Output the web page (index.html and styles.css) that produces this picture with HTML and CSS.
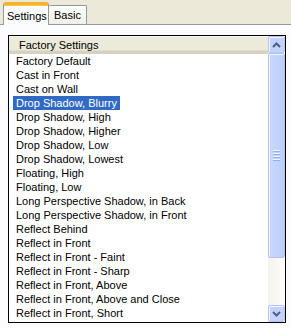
FILE: index.html
```html
<!DOCTYPE html>
<html>
<head>
	<title>Settings</title>
	<link rel="stylesheet" href="styles.css">
</head>
<body>
	<div class="tab-strip">
		<div class="tab tab-active">Settings</div>
		<div class="tab">Basic</div>
	</div>
	<div class="panel">
		<div class="list-box">
			<div class="list-main">
				<div class="list-header">Factory Settings</div>
				<div class="list-rows">
					<div class="row"><span>Factory Default</span></div>
					<div class="row"><span>Cast in Front</span></div>
					<div class="row"><span>Cast on Wall</span></div>
					<div class="row row-selected"><span>Drop Shadow, Blurry</span></div>
					<div class="row"><span>Drop Shadow, High</span></div>
					<div class="row"><span>Drop Shadow, Higher</span></div>
					<div class="row"><span>Drop Shadow, Low</span></div>
					<div class="row"><span>Drop Shadow, Lowest</span></div>
					<div class="row"><span>Floating, High</span></div>
					<div class="row"><span>Floating, Low</span></div>
					<div class="row"><span>Long Perspective Shadow, in Back</span></div>
					<div class="row"><span>Long Perspective Shadow, in Front</span></div>
					<div class="row"><span>Reflect Behind</span></div>
					<div class="row"><span>Reflect in Front</span></div>
					<div class="row"><span>Reflect in Front - Faint</span></div>
					<div class="row"><span>Reflect in Front - Sharp</span></div>
					<div class="row"><span>Reflect in Front, Above</span></div>
					<div class="row"><span>Reflect in Front, Above and Close</span></div>
					<div class="row"><span>Reflect in Front, Short</span></div>
				</div>
			</div>
			<div class="scrollbar">
				<div class="sb-button">
					<svg width="9" height="6" viewBox="0 0 9 6"><polyline points="1,5 4.5,1.5 8,5" fill="none" stroke="#4d6185" stroke-width="2"/></svg>
				</div>
				<div class="sb-thumb">
					<div class="grip">
						<i></i><i></i><i></i><i></i>
					</div>
				</div>
				<div class="sb-track"></div>
				<div class="sb-button">
					<svg width="9" height="6" viewBox="0 0 9 6"><polyline points="1,1 4.5,4.5 8,1" fill="none" stroke="#4d6185" stroke-width="2"/></svg>
				</div>
			</div>
		</div>
	</div>
</body>
</html>
```

FILE: styles.css
```css
body {
	margin: 0;
	background: #fcfcfe;
	font-family: "Liberation Sans", Arial, sans-serif;
	font-size: 11px;
	color: #000;
}
.tab-strip {
	display: flex;
	align-items: flex-end;
	height: 24px;
	padding-left: 3px;
	background: #ece9d8;
	border-bottom: 1px solid #919b9c;
}
.tab {
	box-sizing: border-box;
	width: 38px;
	height: 19px;
	padding: 3px 0 0 5px;
	background: linear-gradient(#fefefe, #f1efe6);
	border: 1px solid #919b9c;
	border-bottom: none;
	border-left: none;
	border-radius: 2px 2px 0 0;
}
.tab-active {
	width: 46px;
	height: 23px;
	margin-bottom: -1px;
	padding: 5px 0 0 3px;
	background: #fcfcfe;
	border-left: 1px solid #919b9c;
	border-top: 3px solid #f6b233;
	border-radius: 3px 3px 0 0;
	box-shadow: inset 0 1px 0 #ffc73c;
}
.panel {
	padding: 10px 0 0 8px;
}
.list-box {
	display: flex;
	width: 276px;
	height: 286px;
	border: 1px solid #000;
	background: #fff;
	overflow: hidden;
}
.list-main {
	flex: 1;
	overflow: hidden;
}
.list-header {
	box-sizing: border-box;
	height: 18px;
	padding: 3px 0 0 10px;
	background: #ebeadb;
	border-bottom: 3px solid #d6d2c2;
	box-shadow: inset 0 -1px 0 #e2decd, inset 0 1px 0 #f7f6ef;
}
.row {
	height: 14px;
	line-height: 14px;
	padding-left: 4px;
	white-space: nowrap;
}
.row span {
	display: inline-block;
	padding: 0 3px;
}
.row-selected span {
	background: #316ac5;
	color: #fff;
}
.scrollbar {
	display: flex;
	flex-direction: column;
	width: 17px;
	background: linear-gradient(90deg, #f3f1ec, #fefefb);
}
.sb-button {
	box-sizing: border-box;
	display: flex;
	align-items: center;
	justify-content: center;
	height: 17px;
	background: #c3d3fd;
	border: 1px solid #b4c8f6;
	border-radius: 2px;
	box-shadow: inset 1px 1px 0 #eef3fe;
}
.sb-thumb {
	box-sizing: border-box;
	display: flex;
	align-items: center;
	justify-content: center;
	height: 205px;
	background: linear-gradient(90deg, #c9d8fc, #bccffb);
	border: 1px solid #b0c4f0;
	border-radius: 2px;
	box-shadow: inset 1px 1px 0 #eef3fe;
}
.grip {
	display: flex;
	flex-direction: column;
	gap: 1px;
}
.grip i {
	display: block;
	width: 7px;
	height: 1px;
	background: #eef4fe;
	border-bottom: 1px solid #8cb0f8;
}
.sb-track {
	flex: 1;
}
```
